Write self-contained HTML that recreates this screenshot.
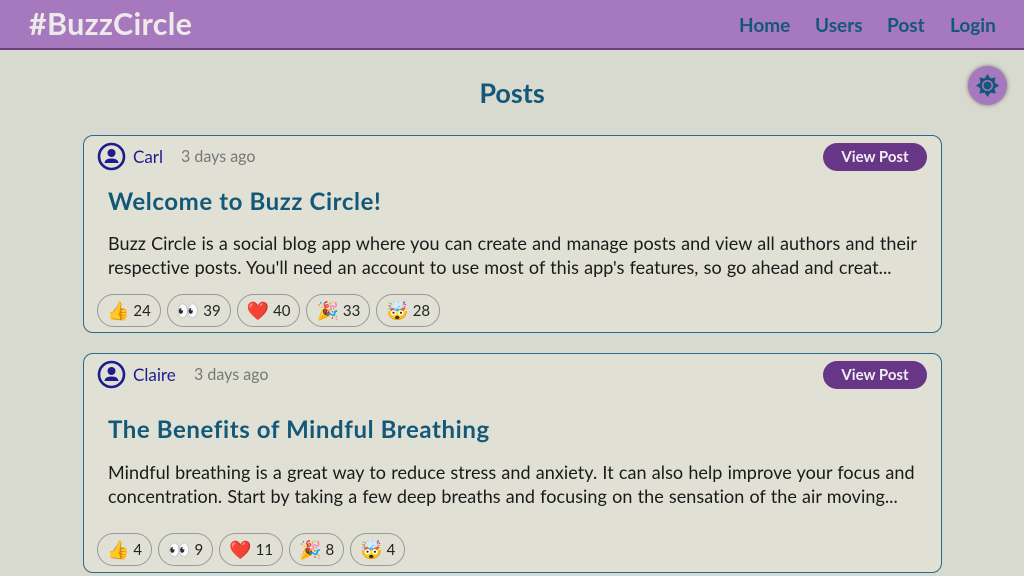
<!DOCTYPE html>
<html><head><meta charset="utf-8"><style>
*{box-sizing:border-box;margin:0;padding:0}
body{width:1024px;height:576px;overflow:hidden;background:#d8d9cf;font-family:"Lato","Liberation Sans",sans-serif;position:relative}
.hdr{height:50px;background:#a678bd;border-bottom:2px solid #6a3f85;position:relative}
.logo{position:absolute;left:29px;top:6px;font-size:30.5px;font-weight:bold;color:#eeeae8;letter-spacing:.3px}
.nav{position:absolute;top:14px;font-size:19px;font-weight:bold;color:#135879}
h1{position:absolute;top:76px;width:100%;text-align:center;font-size:27px;color:#135879;font-weight:bold}
.gear{position:absolute;left:968px;top:66px;width:39px;height:39px;border-radius:50%;background:#a678bd;box-shadow:0 0 4px rgba(0,0,0,.45)}
.card{position:absolute;left:83px;width:859px;background:#e0e1d4;border:1px solid #2a6a8a;border-radius:10px}
.av{position:absolute;left:13px;top:6px}
.name{position:absolute;left:49px;top:10px;font-size:17px;color:#1d1b8e}
.time{position:absolute;top:11px;font-size:16px;color:#777}
.vp{position:absolute;right:14px;top:7px;width:104px;height:28px;border-radius:14px;background:#673686;color:#f2eef2;font-size:15px;font-weight:bold;text-align:center;line-height:28px}
.title{position:absolute;left:24px;font-size:24px;font-weight:bold;color:#135879;letter-spacing:.6px}
.body{position:absolute;left:24px;width:835px;font-size:18px;line-height:24px;color:#1a1a1a;letter-spacing:.05px;word-spacing:.5px}
.rx{position:absolute;left:13px;display:flex;gap:6px}
.r{height:33px;border:1px solid #999;border-radius:17px;padding:0 9px;display:flex;align-items:center;gap:4px;font-size:15px;color:#222}
.r span.e{font-size:18px}
</style></head><body>
<div class="hdr"><div class="logo">#BuzzCircle</div>
<div class="nav" style="left:739px">Home</div><div class="nav" style="left:815px">Users</div><div class="nav" style="left:887px">Post</div><div class="nav" style="left:950px">Login</div></div>
<div class="gear"><svg width="39" height="39" viewBox="0 0 39 39"><polygon fill="#135879" points="19.5,8 22.5,12.5 27.6,11.4 26.5,16.5 31,19.5 26.5,22.5 27.6,27.6 22.5,26.5 19.5,31 16.5,26.5 11.4,27.6 12.5,22.5 8,19.5 12.5,16.5 11.4,11.4 16.5,12.5"/><circle cx="19.5" cy="19.5" r="5.5" fill="#a678bd"/><circle cx="19.5" cy="19.5" r="4" fill="#135879"/></svg></div>
<h1>Posts</h1>

<div class="card" style="top:135px;height:198px">
<svg class="av" width="29" height="29" viewBox="0 0 29 29"><circle cx="14.5" cy="14.5" r="12.5" fill="none" stroke="#1d1b8e" stroke-width="2.6"/><circle cx="14.5" cy="11" r="4" fill="#1d1b8e"/><path d="M7.5 21 Q8 16.5 14.5 16.5 Q21 16.5 21.5 21 Z" fill="#1d1b8e"/></svg>
<div class="name">Carl</div><div class="time" style="left:97px">3 days ago</div>
<div class="vp">View Post</div>
<div class="title" style="top:51px">Welcome to Buzz Circle!</div>
<div class="body" style="top:95px">Buzz Circle is a social blog app where you can create and manage posts and view all authors and their respective posts. You'll need an account to use most of this app's features, so go ahead and creat...</div>
<div class="rx" style="top:158px"><div class="r"><span class="e">👍</span>24</div><div class="r"><span class="e">👀</span>39</div><div class="r"><span class="e">❤️</span>40</div><div class="r"><span class="e">🎉</span>33</div><div class="r"><span class="e">🤯</span>28</div></div>
</div>

<div class="card" style="top:353px;height:220px">
<svg class="av" width="29" height="29" viewBox="0 0 29 29"><circle cx="14.5" cy="14.5" r="12.5" fill="none" stroke="#1d1b8e" stroke-width="2.6"/><circle cx="14.5" cy="11" r="4" fill="#1d1b8e"/><path d="M7.5 21 Q8 16.5 14.5 16.5 Q21 16.5 21.5 21 Z" fill="#1d1b8e"/></svg>
<div class="name">Claire</div><div class="time" style="left:110px">3 days ago</div>
<div class="vp">View Post</div>
<div class="title" style="top:61px">The Benefits of Mindful Breathing</div>
<div class="body" style="top:106px">Mindful breathing is a great way to reduce stress and anxiety. It can also help improve your focus and concentration. Start by taking a few deep breaths and focusing on the sensation of the air moving...</div>
<div class="rx" style="top:179px"><div class="r"><span class="e">👍</span>4</div><div class="r"><span class="e">👀</span>9</div><div class="r"><span class="e">❤️</span>11</div><div class="r"><span class="e">🎉</span>8</div><div class="r"><span class="e">🤯</span>4</div></div>
</div>
</body></html>
